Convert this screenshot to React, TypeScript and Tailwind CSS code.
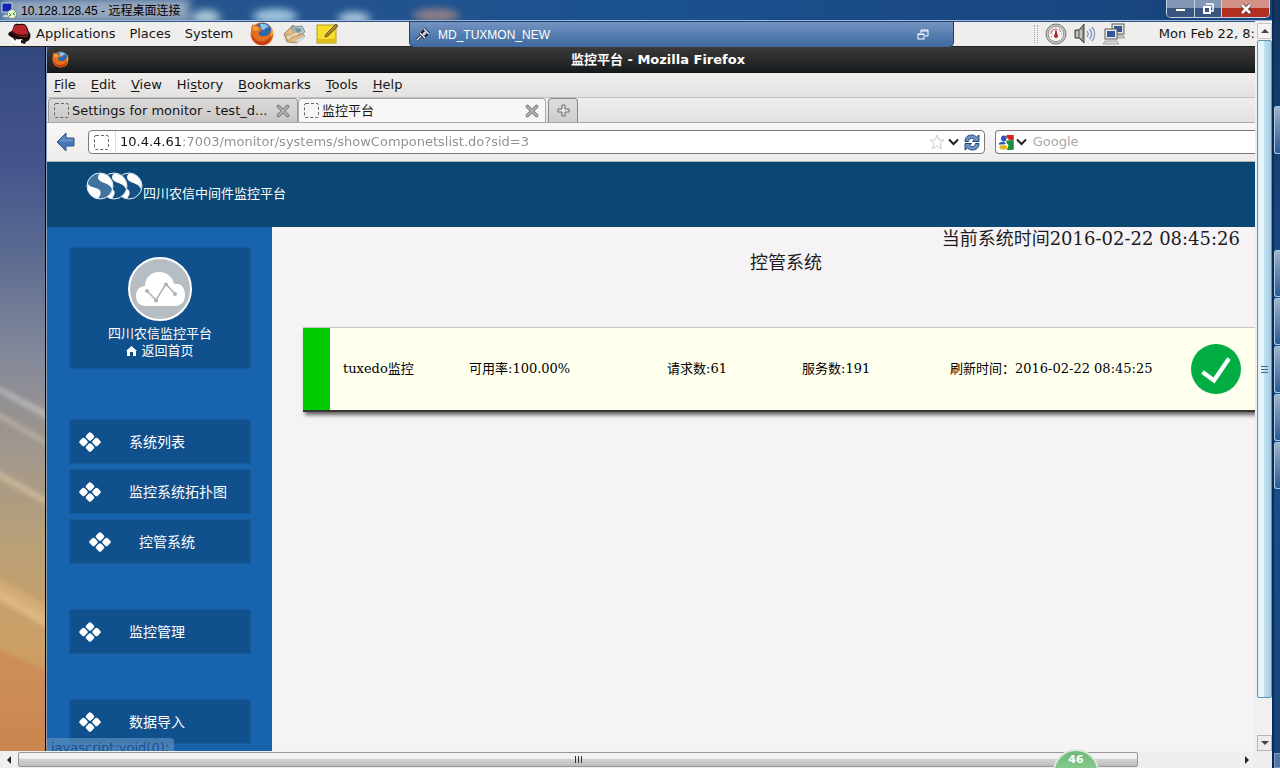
import type { ReactNode } from 'react';

function Wallpaper() {
  return (
    <svg className="h-full w-full" viewBox="0 0 46 704" preserveAspectRatio="none" aria-hidden="true">
      <defs>
        <linearGradient id="sky" x1="0" y1="0" x2="0" y2="1">
          <stop offset="0" stopColor="#32497f" />
          <stop offset="0.17" stopColor="#46548c" />
          <stop offset="0.3" stopColor="#5d6c91" />
          <stop offset="0.44" stopColor="#84899a" />
          <stop offset="0.58" stopColor="#a2988c" />
          <stop offset="0.7" stopColor="#b8a078" />
          <stop offset="0.85" stopColor="#cda066" />
          <stop offset="1" stopColor="#cc8a50" />
        </linearGradient>
        <filter id="soft" x="-20%" y="-20%" width="140%" height="140%">
          <feGaussianBlur stdDeviation="2" />
        </filter>
      </defs>
      <rect width="46" height="704" fill="url(#sky)" />
      <g filter="url(#soft)">
        <path d="M-4 338L50 365V374L-4 344Z" fill="#c9c6c4" opacity=".6" />
        <path d="M-4 363L50 394V401L-4 370Z" fill="#c3b5a5" opacity=".6" />
        <path d="M-4 422L50 452V460L-4 430Z" fill="#d2bf9e" opacity=".7" />
        <path d="M-4 530L50 560V574L-4 545Z" fill="#e0b57c" opacity=".6" />
        <path d="M-4 542L50 572V582L-4 552Z" fill="#e6c08a" opacity=".7" />
        <path d="M-4 600L50 625V704H-4Z" fill="#cc8250" opacity=".5" />
      </g>
    </svg>
  );
}

function TitleGlow() {
  return (
    <svg className="absolute inset-0 h-full w-full" viewBox="0 0 1272 21" preserveAspectRatio="none" aria-hidden="true">
      <defs>
        <filter id="blobs" x="-10%" y="-100%" width="120%" height="300%">
          <feGaussianBlur stdDeviation="4" />
        </filter>
      </defs>
      <g filter="url(#blobs)">
        <rect x="0" y="-2" width="190" height="26" fill="#8fa3bb" opacity=".85" />
        <rect x="14" y="3" width="172" height="15" fill="#a9b6c8" opacity=".6" />
        <ellipse cx="206" cy="18" rx="14" ry="8" fill="#a3c3d2" />
        <ellipse cx="275" cy="17" rx="22" ry="8" fill="#9ac0dc" />
        <ellipse cx="354" cy="19" rx="16" ry="7" fill="#a3c0da" />
        <ellipse cx="436" cy="16" rx="23" ry="7" fill="#8d7d86" />
      </g>
    </svg>
  );
}

function FirefoxIcon({ className }: { className: string }) {
  return (
    <svg className={className} viewBox="0 0 24 24" aria-hidden="true">
      <circle cx="12" cy="12" r="11.4" fill="#d9601a" />
      <circle cx="13" cy="9.4" r="8.6" fill="#2d68ad" />
      <path d="M10 2C13 1 17 2 19 5C17 5 15 6 14 8L11 7Z" fill="#8cc5ea" />
      <path d="M1 8C1 5 2 3 3 2L5 4C7 3 9 4 10 6C12 6 13 7 12 8L9 10C8 13 11 15 14 14C18 14 20 12 21 8C24 12 23 19 18 22C11 25 1 21 1 12Z" fill="#e2701d" />
      <path d="M2 11C3 18 9 21 15 19C19 17 21 15 22 12C22 18 18 23 12 23C6 23 1 18 2 11Z" fill="#c33c16" />
      <path d="M20 4C22 7 22 12 20 15C24 13 24 8 20 4Z" fill="#f6bb3e" />
      <path d="M3 3L5 5C7 4 8 5 9 7L6 9L3 8Z" fill="#f3a337" />
    </svg>
  );
}

function RedHatIcon() {
  return (
    <svg className="h-[22px] w-[23px]" viewBox="0 0 23 22" aria-hidden="true">
      <path d="M1 12C2 18 7 22 13 22C18 22 20 19 20 16L11 11Z" fill="#fff" />
      <path d="M0 11C1 9 3 8 4 8L6 2C8 0 11 1 12 1C15 0 18 1 19 4L21 9C23 11 23 14 21 17C19 19 17 19 15 18L14 16C9 17 2 15 0 11Z" fill="#1a0c0c" />
      <path d="M4 8L6.500 3C9 1 11 3 13 2C16 1 18 3 18.500 5L20 10C21 13 19 14 16 14C11 14 5 12 4 8Z" fill="#b8272c" />
      <path d="M4.500 8C7 11 13 13 19 11L19.500 12C17 14 7 14 4 9Z" fill="#3a0d0f" />
      <path d="M5 15L8 16L7 18ZM13 17L17 18L19 17L17 21L13 20Z" fill="#201514" />
    </svg>
  );
}

function MailIcon() {
  return (
    <svg className="h-[22px] w-[24px]" viewBox="0 0 24 22" aria-hidden="true">
      <path d="M1 11L10 2L22 13L14 20L4 19Z" fill="#ddba85" stroke="#94754b" strokeWidth=".8" />
      <path d="M8 4L19 3L22 9L14 13Z" fill="#b9c9cb" stroke="#657c80" strokeWidth=".8" />
      <path d="M11 5L17 5L19 8L14 10Z" fill="#6f979f" />
      <path d="M2 12C7 14 11 8 14 9L17 12L9 14L5 18Z" fill="#edd3aa" stroke="#a38962" strokeWidth=".7" />
      <path d="M13 17L22 13L21 16L14 20Z" fill="#c9dbe0" />
    </svg>
  );
}

function NoteIcon() {
  return (
    <svg className="h-[22px] w-[23px]" viewBox="0 0 23 22" aria-hidden="true">
      <rect x="1" y="2" width="19" height="18" fill="#f5de2e" stroke="#b2981a" />
      <path d="M2 16H20V20H2Z" fill="#dfbd1d" />
      <path d="M9 14L10 11L20 1L22 3L12 13Z" fill="#a58434" stroke="#574516" strokeWidth=".8" />
    </svg>
  );
}

function PinIcon() {
  return (
    <svg className="h-[14px] w-[14px]" viewBox="0 0 14 14" aria-hidden="true">
      <path d="M1 12L5 8M4 5L9 10M5 6L9 2M8 9L12 5M8 1L13 6" stroke="#111c30" strokeWidth="3" />
      <path d="M1 12L5 8M4 5L9 10M8 1L13 6" stroke="#fff" strokeWidth="1.2" />
      <path d="M6 6L9 3L11 5L8 8Z" fill="#c8d0da" />
    </svg>
  );
}

function RestoreIcon() {
  return (
    <svg className="h-[12px] w-[12px]" viewBox="0 0 12 12" fill="none" aria-hidden="true">
      <path d="M4 4V1H11V7H8M4 2H11" stroke="#fff" />
      <rect x="1" y="5" width="6" height="5" stroke="#fff" />
      <path d="M1 5.5H7" stroke="#fff" />
    </svg>
  );
}

function GaugeIcon() {
  return (
    <svg className="h-[22px] w-[22px]" viewBox="0 0 22 22" fill="none" aria-hidden="true">
      <circle cx="11" cy="11" r="10" fill="#c9c9c7" stroke="#777" />
      <circle cx="11" cy="11" r="7.8" fill="#f4f4f2" stroke="#929292" />
      <path d="M6 11C6 8 8 6 10 6" stroke="#d66" strokeWidth="1.2" />
      <path d="M14 6L16 9M16 11H17M6 14L7 13" stroke="#888" />
      <path d="M11 4L12.5 13H9.5Z" fill="#a8201c" />
      <circle cx="11" cy="13" r="2" fill="#b02822" />
    </svg>
  );
}

function SpeakerIcon() {
  return (
    <svg className="h-[22px] w-[22px]" viewBox="0 0 22 22" fill="none" aria-hidden="true">
      <path d="M1 7H5L10 1V20L5 15H1Z" fill="#8b8d88" stroke="#424440" />
      <path d="M3 8V14M7 7V15" stroke="#d7d9d4" strokeWidth="1.4" />
      <path d="M13 8C14.500 10 14.500 12 13 14M15.500 6C18 9 18 13 15.500 16M18 4C21.500 8 21.500 14 18 18" stroke="#7290ba" strokeWidth="1.2" />
    </svg>
  );
}

function NetworkIcon() {
  return (
    <svg className="h-[22px] w-[22px]" viewBox="0 0 22 22" aria-hidden="true">
      <rect x="9" y="1" width="12" height="10" fill="#e3e3df" stroke="#5c5c58" />
      <rect x="11" y="3" width="8" height="6" fill="#31589b" />
      <path d="M13 12H20L22 15H12Z" fill="#c9c9c3" stroke="#888" strokeWidth=".6" />
      <rect x="2" y="6" width="12" height="10" fill="#e9e9e5" stroke="#5c5c58" />
      <rect x="4" y="8" width="8" height="6" fill="#31589b" />
      <path d="M2 18H14L16 21H0Z" fill="#deded8" stroke="#888" strokeWidth=".7" />
    </svg>
  );
}

function PagePlaceholder() {
  return (
    <svg className="h-[15px] w-[15px] shrink-0" viewBox="0 0 15 15" aria-hidden="true">
      <rect x=".5" y=".5" width="14" height="14" rx="1.500" fill="none" stroke="#666" strokeDasharray="3 2" />
    </svg>
  );
}

function CrossIcon() {
  return (
    <svg className="h-[14px] w-[14px]" viewBox="0 0 14 14" aria-hidden="true">
      <path d="M2.500 2.500L11.500 11.500M11.500 2.500L2.500 11.500" stroke="#7d7b79" strokeWidth="3.600" strokeLinecap="round" />
      <path d="M2.500 2.500L11.500 11.500M11.500 2.500L2.500 11.500" stroke="#bbb9b7" strokeWidth="1.600" strokeLinecap="round" />
    </svg>
  );
}

function ChevronIcon() {
  return (
    <svg className="h-[8px] w-[11px]" viewBox="0 0 11 8" fill="none" aria-hidden="true">
      <path d="M1 1.500L5.500 6L10 1.500" stroke="#222" strokeWidth="2" />
    </svg>
  );
}

function ReloadIcon() {
  return (
    <svg className="h-[17px] w-[16px]" viewBox="0 0 16 17" aria-hidden="true">
      <path d="M1 7.500C1 3 4 1 8 1C10 1 11.500 2 12.500 3L15 1V7.500H8.500L10.500 5.500C8 3.500 5 4.500 4.500 7.500Z" fill="#6d92c4" stroke="#274778" />
      <path d="M15 9.500C15 14 12 16 8 16C6 16 4.500 15 3.500 14L1 16V9.500H7.500L5.500 11.500C8 13.500 11 12.500 11.500 9.500Z" fill="#6d92c4" stroke="#274778" />
    </svg>
  );
}

function GoogleIcon() {
  return (
    <svg className="h-[17px] w-[17px]" viewBox="0 0 17 17" aria-hidden="true">
      <rect width="17" height="17" fill="#fff" />
      <path d="M9 0H17V6H12L8 2Z" fill="#d4261f" />
      <path d="M10 6H17V16C17 17 16 17 15 17H9L11 12L8 8Z" fill="#1a8c3a" />
      <ellipse cx="5.500" cy="4" rx="3.200" ry="3.500" fill="#2858b8" />
      <path d="M0 9C3 8 4 8 6 8L8 10C6 11 3 11 0 11Z" fill="#2858b8" />
      <ellipse cx="5" cy="14" rx="4.500" ry="2.700" fill="#e3b722" />
    </svg>
  );
}

function LogoDisc({ x, fill }: { x: number; fill: string }) {
  return (
    <g transform={`translate(${x} 0)`}>
      <circle cx="14" cy="14" r="13" fill={fill} stroke="#e4eff8" />
      <path d="M1.500 11C3 15 8 15 12 17C16 19 15 23 12 26.500C6 26 1.500 21 1.500 14Z" fill="#fff" />
      <path d="M14 1.500C21 1.500 26.500 7 26.500 14L26 17C24 13 21 12 17 10.500C11 8 11 4 14 1.500Z" fill="#fff" />
    </g>
  );
}

function SiteLogo() {
  return (
    <svg className="h-[28px] w-[57px]" viewBox="0 0 57 28" aria-hidden="true">
      <LogoDisc x={29} fill="#155085" />
      <LogoDisc x={14} fill="#155085" />
      <LogoDisc x={0} fill="#42739f" />
    </svg>
  );
}

function CloudBadge() {
  return (
    <svg className="h-[64px] w-[64px]" viewBox="0 0 64 64" aria-hidden="true">
      <circle cx="32" cy="32" r="31" fill="#b6bec4" stroke="#fff" strokeWidth="2" />
      <path d="M18 49C11 49 8 44 8 39C8 33 12 29 17 29C17 21 23 15 31 15C39 15 45 20 46 27C53 26 57 31 57 38C57 45 53 49 47 49Z" fill="#fff" />
      <path d="M19 34L28 43L38 27L47 37" fill="none" stroke="#abb4bb" strokeWidth="1.600" />
      <g fill="#abb4bb">
        <circle cx="19" cy="34" r="2" />
        <circle cx="28" cy="43.500" r="2" />
        <circle cx="38" cy="27.500" r="2" />
        <circle cx="47" cy="37" r="2" />
      </g>
    </svg>
  );
}

function DiamondsIcon() {
  return (
    <svg className="h-[20px] w-[22px] shrink-0" viewBox="0 0 22 20" fill="#fff" aria-hidden="true">
      <rect x="7.500" y="1" width="7" height="7" rx="1.800" transform="rotate(45 11 4.500)" />
      <rect x="7.500" y="12" width="7" height="7" rx="1.800" transform="rotate(45 11 15.500)" />
      <rect x="1" y="6.500" width="7" height="7" rx="1.800" transform="rotate(45 4.500 10)" />
      <rect x="14" y="6.500" width="7" height="7" rx="1.800" transform="rotate(45 17.500 10)" />
    </svg>
  );
}

function SuccessIcon() {
  return (
    <svg className="h-[50px] w-[50px]" viewBox="0 0 50 50" role="img" aria-label="正常">
      <circle cx="25" cy="25" r="25" fill="#02ae44" />
      <path d="M11.500 28L23 36.500L38 14.500" fill="none" stroke="#fff" strokeWidth="4.200" />
    </svg>
  );
}

function MenuLink({ hot, rest, lead = '' }: { hot: string; rest: string; lead?: string }) {
  return (
    <button type="button">
      {lead}
      <span className="underline underline-offset-2">{hot}</span>
      {rest}
    </button>
  );
}

function NavItem({ children, inset = false }: { children: ReactNode; inset?: boolean }) {
  return (
    <li>
      <a
        href="#"
        className={`flex h-[45px] items-center gap-7 bg-[#10508c] text-sm text-white inset-ring inset-ring-[#175a9c] ${inset ? 'pl-5' : 'pl-[10px]'}`}
      >
        <DiamondsIcon />
        {children}
      </a>
    </li>
  );
}

const taskButtons = [
  { id: 'a', css: 'mt-[106px] h-[48px]' },
  { id: 'b', css: 'mt-[96px] h-[47px]' },
  { id: 'c', css: 'mt-px h-[47px]' },
  { id: 'd', css: 'mt-px h-[47px]' },
  { id: 'e', css: 'mt-px h-[47px]' },
  { id: 'f', css: 'mt-px h-[47px]' },
];

function RemoteTitleBar() {
  return (
    <header className="relative flex h-[21px] shrink-0 items-start justify-between border-b border-[#9fb9d6] bg-linear-to-r from-[#2a568d] via-[#1b5190] to-[#17427a]">
      <TitleGlow />
      <div className="relative flex h-[21px] items-center gap-[3px] pl-px font-['Liberation_Sans','Noto_Sans_CJK_SC',sans-serif] text-xs text-black">
        <svg className="h-[17px] w-[17px]" viewBox="0 0 17 17" aria-hidden="true">
          <rect x="1" y="1" width="10" height="9" fill="#1625b0" stroke="#c8d4ea" />
          <path d="M3 13H9V15H2Z" fill="#d5dae2" />
          <circle cx="11" cy="12" r="4.500" fill="#e9f5dc" stroke="#5c7a52" strokeWidth=".6" />
          <path d="M8 11L10 13L8 14M14 10L12 12L14 13" stroke="#2f9c2c" fill="none" />
        </svg>
        <h1>10.128.128.45 - 远程桌面连接</h1>
      </div>
      <div className="relative mr-[2px] flex h-[18px] overflow-hidden rounded-b-[5px] border border-t-0 border-[#c6d3e4] text-white">
        <button type="button" aria-label="最小化" className="flex w-[28px] items-end justify-center border-r border-[#c6d3e4] bg-linear-to-b from-[#8197b4] from-50% to-[#38557f] to-50% pb-[5px]">
          <span className="h-[4px] w-[11px] border border-[#46566d] bg-white" />
        </button>
        <button type="button" aria-label="还原" className="flex w-[27px] items-center justify-center border-r border-[#c6d3e4] bg-linear-to-b from-[#8197b4] from-50% to-[#38557f] to-50%">
          <svg className="h-[12px] w-[12px]" viewBox="0 0 12 12" fill="none" aria-hidden="true">
            <path d="M4 1H11V8H9" stroke="#fff" strokeWidth="1.500" />
            <rect x="2" y="4" width="6" height="6" stroke="#fff" strokeWidth="2" />
          </svg>
        </button>
        <button type="button" aria-label="关闭" className="flex w-[47px] items-center justify-center bg-linear-to-b from-[#d29285] from-45% to-[#b32f20] to-50%">
          <svg className="h-[12px] w-[12px]" viewBox="0 0 12 12" aria-hidden="true">
            <path d="M2 2L10 10M10 2L2 10" stroke="#4b3038" strokeWidth="4" />
            <path d="M2 2L10 10M10 2L2 10" stroke="#fff" strokeWidth="2.500" />
          </svg>
        </button>
      </div>
    </header>
  );
}

function GnomePanel() {
  return (
    <div className="relative flex h-[26px] shrink-0 items-center justify-between border-t border-b border-t-[#2d5587] border-b-[#222] bg-[#f0eeec]">
      <nav className="flex items-center gap-[14px] pl-2" aria-label="桌面菜单">
        <button type="button" className="flex items-center gap-[5px]">
          <RedHatIcon />
          Applications
        </button>
        <button type="button">Places</button>
        <button type="button">System</button>
        <div className="flex items-center gap-[9px] pl-[3px]">
          <button type="button" aria-label="Firefox"><FirefoxIcon className="h-[24px] w-[24px]" /></button>
          <button type="button" aria-label="Mail"><MailIcon /></button>
          <button type="button" aria-label="Notes"><NoteIcon /></button>
        </div>
      </nav>
      <div className="flex items-center">
        <span className="mr-[7px] h-[18px] w-[4px] border-x border-dotted border-[#aaa]" />
        <div className="flex items-center gap-[7px]">
          <GaugeIcon />
          <SpeakerIcon />
          <NetworkIcon />
        </div>
        <time className="ml-[34px] whitespace-nowrap">Mon Feb 22, 8:</time>
      </div>
      <div className="absolute -top-px left-[409px] flex h-[27px] w-[545px] items-center justify-between rounded-b-md border border-[#1a3f70] bg-linear-to-b from-[#7593bf] via-[#557eb1] via-50% to-[#40699f] pr-6 pl-[6px] font-['Liberation_Sans',sans-serif] text-xs text-white">
        <div className="flex items-center gap-2">
          <PinIcon />
          <span>MD_TUXMON_NEW</span>
        </div>
        <button type="button" aria-label="还原窗口"><RestoreIcon /></button>
      </div>
    </div>
  );
}

function BrowserChrome() {
  return (
    <>
      <div className="relative flex h-[26px] shrink-0 items-center justify-center overflow-hidden rounded-tl-md border-b border-[#111] bg-linear-to-b from-[#3a3a3a] via-[#2b2b2b] to-[#171b1d] font-bold text-white">
        <FirefoxIcon className="absolute left-[5px] h-[17px] w-[17px]" />
        <span className="pl-[14px]">监控平台 - Mozilla Firefox</span>
      </div>
      <nav className="flex h-[25px] shrink-0 items-center gap-[15px] border-b border-[#c2c0be] bg-linear-to-b from-[#f0eeed] to-[#e4e2e1] pl-[7px]" aria-label="菜单栏">
        <MenuLink hot="F" rest="ile" />
        <MenuLink hot="E" rest="dit" />
        <MenuLink hot="V" rest="iew" />
        <MenuLink lead="Hi" hot="s" rest="tory" />
        <MenuLink hot="B" rest="ookmarks" />
        <MenuLink hot="T" rest="ools" />
        <MenuLink hot="H" rest="elp" />
      </nav>
      <div className="flex h-[25px] shrink-0 items-end border-b border-[#aaa8a6] bg-linear-to-b from-[#f0eeed] to-[#e4e2e1] pl-px" role="tablist">
        <div className="flex h-6 w-[250px] items-center justify-between rounded-t border border-b-0 border-[#999] bg-linear-to-b from-[#dddbda] to-[#c9c7c5] pr-[7px] pl-[5px]">
          <button type="button" role="tab" aria-selected="false" className="flex items-center gap-[3px]">
            <PagePlaceholder />
            Settings for monitor - test_d...
          </button>
          <button type="button" aria-label="关闭标签"><CrossIcon /></button>
        </div>
        <div className="flex h-6 w-[248px] items-center justify-between rounded-t border border-b-0 border-[#aaa] bg-[#f8f7f6] pr-[6px] pl-[5px]">
          <button type="button" role="tab" aria-selected="true" className="flex items-center gap-[3px]">
            <PagePlaceholder />
            监控平台
          </button>
          <button type="button" aria-label="关闭标签"><CrossIcon /></button>
        </div>
        <button type="button" aria-label="新标签" className="ml-[2px] flex h-6 w-[30px] items-center justify-center rounded-t border border-b-0 border-[#888] bg-linear-to-b from-[#e0dedc] to-[#cfcdcb]">
          <svg className="h-[13px] w-[13px]" viewBox="0 0 13 13" aria-hidden="true">
            <path d="M5 1H8V5H12V8H8V12H5V8H1V5H5Z" fill="#e8e6e4" stroke="#666" />
          </svg>
        </button>
      </div>
      <div className="flex h-[39px] shrink-0 items-center border-b border-[#b5b3b1] bg-linear-to-b from-[#f8f7f6] to-[#eeecea] pl-[9px]">
        <button type="button" aria-label="后退">
          <svg className="h-[20px] w-[20px]" viewBox="0 0 20 20" aria-hidden="true">
            <path d="M1 10L10 1V6H18V14H10V19Z" fill="#4677b4" stroke="#34588c" />
            <path d="M3 9.500L9 3.500V7H17V9.500Z" fill="#6490c6" />
          </svg>
        </button>
        <div className="ml-3 flex h-6 w-[897px] items-center rounded border border-[#7c7a78] bg-white pr-1 pl-[5px]">
          <PagePlaceholder />
          <span className="ml-[6px] h-[22px] w-px bg-[#ddd]" />
          <input
            aria-label="地址"
            defaultValue="10.4.4.61:7003/monitor/systems/showComponetslist.do?sid=3"
            className="ml-1 min-w-0 flex-1 bg-linear-to-r from-[#111] from-[62px] to-[#8e8e8e] to-[62px] bg-clip-text text-transparent outline-none"
          />
          <button type="button" aria-label="收藏" className="mr-[3px]">
            <svg className="h-[16px] w-[16px]" viewBox="0 0 16 16" aria-hidden="true">
              <path d="M8 1L10 6H15L11 9.500L12.500 15L8 12L3.500 15L5 9.500L1 6H6Z" fill="#fff" stroke="#ccc" />
            </svg>
          </button>
          <button type="button" aria-label="历史" className="mr-[5px]"><ChevronIcon /></button>
          <button type="button" aria-label="刷新"><ReloadIcon /></button>
        </div>
        <div className="ml-[10px] flex h-6 flex-1 items-center rounded-l border border-r-0 border-[#7c7a78] bg-white pl-[3px]">
          <GoogleIcon />
          <button type="button" aria-label="搜索引擎" className="ml-[2px]"><ChevronIcon /></button>
          <input aria-label="搜索" placeholder="Google" className="ml-[6px] w-full min-w-0 outline-none placeholder:text-[#aaa]" />
        </div>
      </div>
    </>
  );
}

function Sidebar() {
  return (
    <aside className="w-[225px] shrink-0 bg-[#1763ad] pt-5 pr-[21px] pl-[22px]">
      <div className="flex h-[122px] flex-col items-center bg-[#10508c] pt-[10px] text-[13px] leading-[17px] text-white inset-ring inset-ring-[#175a9c]">
        <CloudBadge />
        <p className="mt-1">四川农信监控平台</p>
        <a href="#" className="flex items-center gap-1">
          <svg className="h-[10px] w-[11px]" viewBox="0 0 11 10" fill="#fff" aria-hidden="true">
            <path d="M5.500 0L11 5H10V10H7V6H4V10H1V5H0Z" />
          </svg>
          返回首页
        </a>
      </div>
      <nav className="mt-[50px]" aria-label="导航">
        <ul className="flex flex-col gap-[5px]">
          <NavItem>系统列表</NavItem>
          <NavItem>监控系统拓扑图</NavItem>
          <NavItem inset>控管系统</NavItem>
        </ul>
        <ul className="mt-[45px] flex flex-col gap-[45px]">
          <NavItem>监控管理</NavItem>
          <NavItem>数据导入</NavItem>
        </ul>
      </nav>
    </aside>
  );
}

function Dashboard() {
  return (
    <main className="min-w-0 flex-1 bg-[#f6f3f7] font-['DejaVu_Serif','Noto_Sans_CJK_SC',serif] text-[#1c1c1c]">
      <p className="pr-[15px] text-right text-lg leading-6">当前系统时间2016-02-22 08:45:26</p>
      <h2 className="pl-[45px] text-center text-lg leading-6">控管系统</h2>
      <section className="mt-[52px] ml-[31px] flex h-[85px] border-t border-b-2 border-t-[#c9c9c4] border-b-[#3a3835] bg-[#ffffee] text-[13px] whitespace-nowrap text-black shadow-[2px_3px_4px_rgba(0,0,0,0.6)]">
        <div className="w-[27px] shrink-0 bg-[#00cc00]" />
        <div className="grid flex-1 grid-cols-[126fr_198fr_135fr_148fr_241fr_50px] items-center pr-[14px] pl-[13px]">
          <span>tuxedo监控</span>
          <span>可用率:100.00%</span>
          <span>请求数:61</span>
          <span>服务数:191</span>
          <span>刷新时间：2016-02-22 08:45:25</span>
          <SuccessIcon />
        </div>
      </section>
    </main>
  );
}

function VerticalScrollbar() {
  return (
    <div className="flex w-[17px] shrink-0 flex-col border-l-2 border-[#efefef] bg-[#f1f0f0] pt-[2px]">
      <button type="button" aria-label="向上滚动" className="flex h-4 items-center justify-center border border-[#c5c5c5] bg-[#f4f4f4]">
        <span className="border-x-[4px] border-b-[4px] border-x-transparent border-b-[#444]" />
      </button>
      <div className="mt-px flex flex-[657] flex-col items-center justify-center gap-[2px] rounded-[2px] border border-[#5b93b0] bg-linear-to-r from-[#e4f4fc] from-45% via-[#c0e0f0] via-50% to-[#a5cde2]">
        <span className="h-px w-[7px] bg-[#3d6a84]" />
        <span className="h-px w-[7px] bg-[#3d6a84]" />
        <span className="h-px w-[7px] bg-[#3d6a84]" />
      </div>
      <div className="flex-[37]" />
      <button type="button" aria-label="向下滚动" className="flex h-4 items-center justify-center border border-[#b5b5b5] bg-[#ececec]">
        <span className="border-x-[4px] border-t-[4px] border-x-transparent border-t-[#444]" />
      </button>
    </div>
  );
}

function HorizontalScrollbar() {
  return (
    <div className="relative flex h-[17px] shrink-0 bg-[#efefef] pt-px">
      <button type="button" aria-label="向左滚动" className="flex w-[18px] items-center justify-center">
        <span className="border-y-[4px] border-r-[4px] border-y-transparent border-r-[#222]" />
      </button>
      <div className="flex h-[15px] flex-[1120] items-center justify-center gap-[2px] rounded-[2px] border border-[#979797] bg-linear-to-b from-[#f2f2f2] from-40% via-[#d2d2d2] via-50% to-[#bdbdbd]">
        <span className="h-[7px] w-px bg-[#333]" />
        <span className="h-[7px] w-px bg-[#333]" />
        <span className="h-[7px] w-px bg-[#333]" />
      </div>
      <div className="flex-[100]" />
      <button type="button" aria-label="向右滚动" className="mr-4 flex w-[18px] items-center justify-center">
        <span className="border-y-[4px] border-l-[4px] border-y-transparent border-l-[#222]" />
      </button>
      <div className="absolute -top-[2px] left-[1053px] h-[19px] w-[46px] overflow-hidden">
        <div className="h-[46px] rounded-full border-2 border-[#d9e9dc] bg-linear-to-b from-[#6db877] to-[#a4e0a6] text-center text-[11px] leading-[18px] font-bold text-white">
          46
        </div>
      </div>
    </div>
  );
}

export default function App() {
  return (
    <div className="flex h-screen overflow-hidden bg-[#17447c] font-['DejaVu_Sans','Noto_Sans_CJK_SC',sans-serif] text-[13px] leading-normal text-[#161616]">
      <div className="flex min-w-0 flex-1 flex-col">
        <RemoteTitleBar />
        <div className="flex min-h-0 flex-1">
          <div className="flex min-w-0 flex-1 flex-col">
            <GnomePanel />
            <div className="flex min-h-0 flex-1 bg-[#32497f]">
              <div className="w-[46px] shrink-0 border-r border-black">
                <Wallpaper />
              </div>
              <div className="relative flex min-w-0 flex-1 flex-col overflow-hidden border-l border-[#8fa0b4]">
                <BrowserChrome />
                <div className="flex h-[65px] shrink-0 items-start bg-[#0a4775] pt-[10px] pl-[39px] text-[13px] text-white">
                  <SiteLogo />
                  <span className="pt-3">四川农信中间件监控平台</span>
                </div>
                <div className="flex min-h-0 flex-1">
                  <Sidebar />
                  <Dashboard />
                </div>
                <div className="absolute bottom-0 left-0 h-[13px] w-[127px] overflow-hidden rounded-tr bg-[#5c8fbf]/70 pl-1 leading-5 text-[#1b4f8c]">
                  javascript:void(0);
                </div>
              </div>
            </div>
          </div>
          <VerticalScrollbar />
        </div>
        <HorizontalScrollbar />
      </div>
      <div className="flex w-2 shrink-0 flex-col border-l-2 border-[#0c2a52] bg-linear-to-b from-[#12355f] via-[#1c5194] to-[#164277]">
        {taskButtons.map((task) => (
          <span key={task.id} className={`shrink-0 rounded-l-[3px] border border-r-0 border-[#b4c7de] bg-linear-to-b from-[#a0b4cd] to-[#295995] ${task.css}`} />
        ))}
        <span className="mt-auto h-[15px] border border-r-0 border-[#7d9cc2] bg-[#5077a8]" />
      </div>
    </div>
  );
}
